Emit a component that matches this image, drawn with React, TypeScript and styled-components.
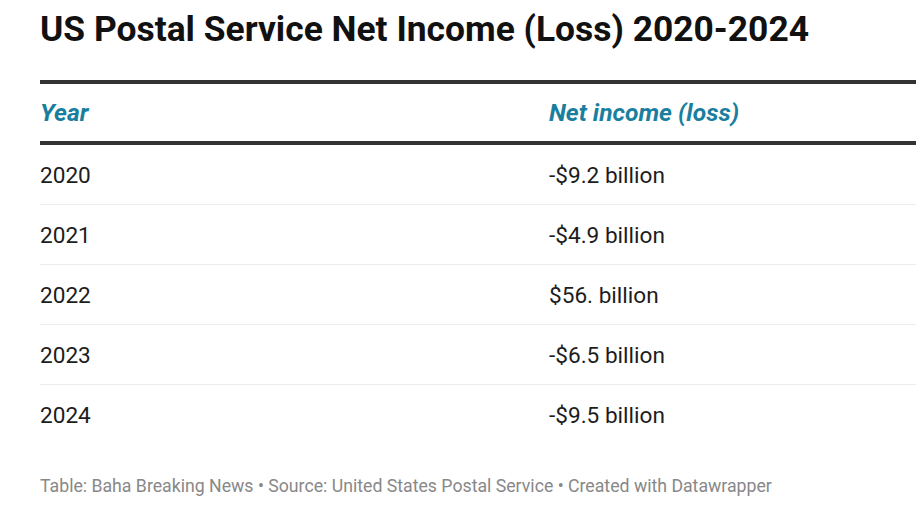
import React from 'react';
import styled, { createGlobalStyle } from 'styled-components';

const rows = [
  { year: '2020', value: '-$9.2 billion' },
  { year: '2021', value: '-$4.9 billion' },
  { year: '2022', value: '$56. billion' },
  { year: '2023', value: '-$6.5 billion' },
  { year: '2024', value: '-$9.5 billion' },
];

const GlobalStyle = createGlobalStyle`
  html, body {
    margin: 0;
    background: #fff;
    overflow: hidden;
  }
  body {
    font-family: Roboto, "Liberation Sans", sans-serif;
    color: #1d1d1d;
  }
`;

const Page = styled.div`
  width: 916px;
  height: 512px;
  overflow: hidden;
  padding: 9px 0 0 40px;
  box-sizing: border-box;
`;

const Title = styled.h1`
  margin: 0;
  font-size: 35.4px;
  font-weight: 700;
  line-height: 40px;
  color: #111;
  white-space: nowrap;
`;

const Table = styled.div`
  width: 1018px;
  margin-top: 31px;
  border-top: 4px solid #333;
`;

const HeaderRow = styled.div`
  display: grid;
  grid-template-columns: 509px 1fr;
  height: 57px;
  align-items: center;
  border-bottom: 4px solid #333;
`;

const HeadCell = styled.div`
  font-size: 24.6px;
  font-weight: 700;
  font-style: italic;
  color: #1a7f9f;
`;

const Row = styled.div<{ $last?: boolean }>`
  display: grid;
  grid-template-columns: 509px 1fr;
  height: 60px;
  padding-top: 2px;
  box-sizing: border-box;
  align-items: center;
  border-bottom: 1px solid ${(p) => (p.$last ? 'transparent' : '#ececec')};
`;

const Cell = styled.div`
  font-size: 22.6px;
  color: #1d1d1d;
`;

const Footer = styled.div`
  margin-top: 31px;
  font-size: 17.7px;
  color: #888;
  white-space: nowrap;
`;

export default function App() {
  return (
    <Page>
      <GlobalStyle />
      <Title>US Postal Service Net Income (Loss) 2020-2024</Title>
      <Table>
        <HeaderRow>
          <HeadCell>Year</HeadCell>
          <HeadCell>Net income (loss)</HeadCell>
        </HeaderRow>
        {rows.map((r, i) => (
          <Row key={r.year} $last={i === rows.length - 1}>
            <Cell>{r.year}</Cell>
            <Cell>{r.value}</Cell>
          </Row>
        ))}
      </Table>
      <Footer>
        Table: Baha Breaking News • Source: United States Postal Service • Created with Datawrapper
      </Footer>
    </Page>
  );
}
